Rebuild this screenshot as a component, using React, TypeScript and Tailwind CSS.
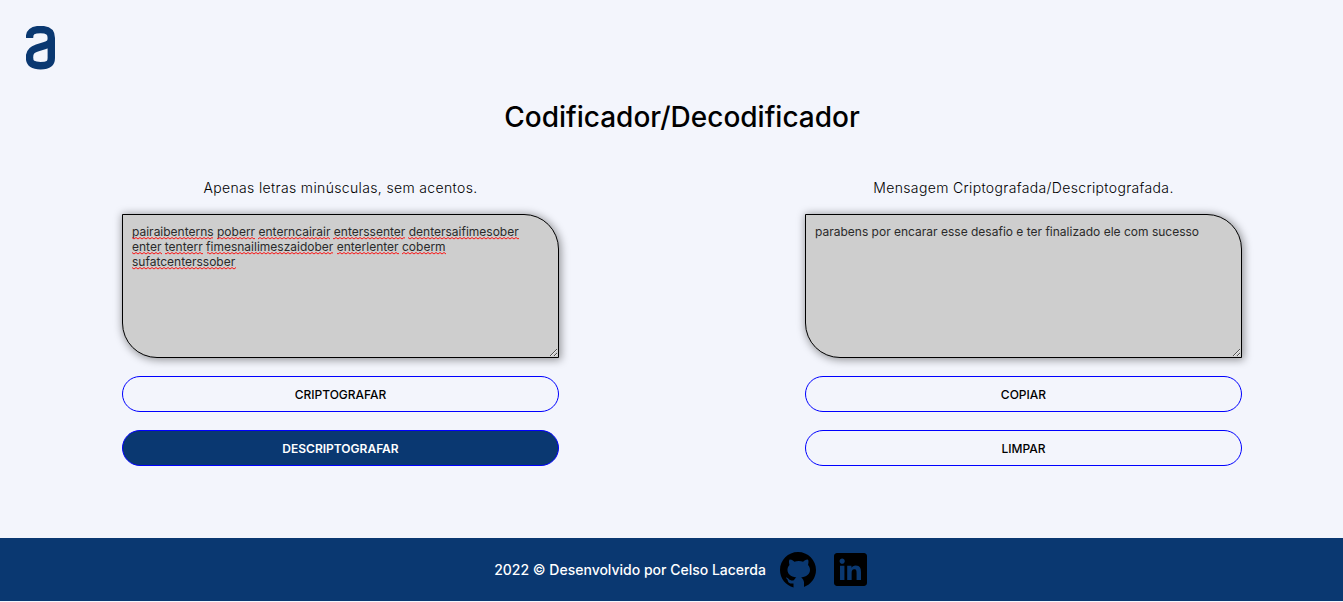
import { useState } from "react";

const FONT = "font-['Inter','Liberation_Sans',sans-serif]";

const SPELLING_MARKS = [
  { x: 0, y: 0, width: 81 },
  { x: 85, y: 0, width: 38 },
  { x: 126, y: 0, width: 72 },
  { x: 201, y: 0, width: 72 },
  { x: 276, y: 0, width: 111 },
  { x: 0, y: 15, width: 30 },
  { x: 33, y: 15, width: 38 },
  { x: 75, y: 15, width: 126 },
  { x: 205, y: 15, width: 62 },
  { x: 270, y: 15, width: 44 },
  { x: 0, y: 30, width: 104 },
];

const RULES: [string, string][] = [
  ["e", "enter"],
  ["i", "imes"],
  ["a", "ai"],
  ["o", "ober"],
  ["u", "ufat"],
];

function encode(text: string) {
  return text.replace(/[eiaou]/g, (c) => RULES.find(([k]) => k === c)![1]);
}

function decode(text: string) {
  return RULES.reduce((acc, [plain, coded]) => acc.split(coded).join(plain), text);
}

const INITIAL =
  "pairaibenterns poberr enterncairair enterssenter dentersaifimesober enter tenterr fimesnailimeszaidober enterlenter coberm sufatcenterssober";

const areaClass =
  "block h-36 w-full resize rounded-tr-[35px] rounded-bl-[35px] border border-black bg-[#cecece] py-[9px] pr-6 pl-[9px] text-xs leading-[15px] font-normal text-[#2a2a2a] shadow-[1px_1px_8px_1px_rgba(0,0,0,0.4)] outline-none";
const labelClass =
  "mb-[15px] block pt-px text-center text-sm leading-[22px] font-light tracking-wide";
const buttonClass =
  "h-9 w-full rounded-full border border-[#0000ff] pt-px text-xs uppercase";
const plainButton = "bg-transparent font-medium text-black";
const activeButton = "bg-[#0a3871] font-semibold text-white";

function Logo() {
  return (
    <svg viewBox="0 0 30 44" className="h-11 w-[30px]" role="img" aria-label="Alura">
      <path
        d="M3.5 12 C3.5 5.5 7 3.5 14.500 3.5 C22 3.500 25.300 6 25.300 12 V32 C25.300 38 22 39.700 14.500 39.700 C7 39.700 3.500 37.500 3.500 31.500 C3.500 25.500 6 23.500 11 22 L19 19.500 C23.500 18 25.300 16.500 25.300 12"
        fill="none"
        stroke="#0a3871"
        strokeWidth="7.400"
      />
    </svg>
  );
}

function GithubIcon() {
  return (
    <svg viewBox="3 3 24 24" className="size-9" fill="#000" aria-hidden="true">
      <path d="M15,3C8.373,3,3,8.373,3,15c0,5.623,3.872,10.328,9.092,11.630C12.036,26.468,12,26.280,12,26.047v-2.051c-0.487,0-1.303,0-1.508,0c-0.821,0-1.551-0.353-1.905-1.009c-0.393-0.729-0.461-1.844-1.435-2.526c-0.289-0.227-0.069-0.486,0.264-0.451c0.615,0.174,1.125,0.596,1.605,1.222c0.478,0.627,0.703,0.769,1.596,0.769c0.433,0,1.081-0.025,1.691-0.121c0.328-0.833,0.895-1.600,1.588-1.962c-3.996-0.411-5.903-2.399-5.903-5.098c0-1.162,0.495-2.286,1.336-3.233C9.053,10.647,8.706,8.730,9.435,8c1.798,0,2.885,1.166,3.146,1.481C13.477,9.174,14.461,9,15.495,9c1.036,0,2.024,0.174,2.922,0.483C18.675,9.170,19.763,8,21.565,8c0.732,0.731,0.381,2.656,0.102,3.594c0.836,0.945,1.328,2.066,1.328,3.226c0,2.697-1.904,4.684-5.894,5.097C18.199,20.490,19,22.100,19,23.313v2.734c0,0.104-0.023,0.179-0.035,0.268C23.641,24.676,27,20.236,27,15C27,8.373,21.627,3,15,3z" />
    </svg>
  );
}

function LinkedinIcon() {
  return (
    <svg viewBox="4 4 22 22" className="size-[33px]" fill="#000" aria-hidden="true">
      <path d="M24,4H6C4.895,4,4,4.895,4,6v18c0,1.105,0.895,2,2,2h18c1.105,0,2-0.895,2-2V6C26,4.895,25.105,4,24,4z M10.954,22h-2.950v-9.492h2.950V22z M9.449,11.151c-0.951,0-1.720-0.771-1.720-1.720c0-0.949,0.770-1.719,1.720-1.719c0.948,0,1.719,0.771,1.719,1.719C11.168,10.380,10.397,11.151,9.449,11.151z M22.004,22h-2.948v-4.616c0-1.101-0.020-2.517-1.533-2.517c-1.535,0-1.771,1.199-1.771,2.437V22h-2.948v-9.492h2.830v1.297h0.040c0.394-0.746,1.356-1.533,2.791-1.533c2.987,0,3.539,1.966,3.539,4.522V22z" />
    </svg>
  );
}

function SpellingMarks() {
  return (
    <svg
      className="pointer-events-none absolute top-[22px] left-[10px] h-[34px] w-[400px]"
      aria-hidden="true"
    >
      <defs>
        <pattern id="squiggle" width="4" height="15" patternUnits="userSpaceOnUse">
          <path d="M0 1.500 L2 3 L4 1.500" fill="none" stroke="#ff0000" strokeWidth="0.900" />
        </pattern>
      </defs>
      {SPELLING_MARKS.map((m) => (
        <rect key={`${m.x}-${m.y}`} x={m.x} y={m.y} width={m.width} height="4" fill="url(#squiggle)" />
      ))}
    </svg>
  );
}

export default function App() {
  const [input, setInput] = useState(INITIAL);
  const [output, setOutput] = useState(
    "parabens por encarar esse desafio e ter finalizado ele com sucesso",
  );

  return (
    <div className={`min-h-screen bg-[#f3f5fc] text-black ${FONT}`}>
      <header className="pt-[26px] pl-[26px]">
        <Logo />
      </header>
      <main className="pr-[101px] pl-[122px]">
        <h1 className="pt-7 text-center text-[28px] leading-[38px] font-medium">
          Codificador/Decodificador
        </h1>
        <div className="mt-10 grid grid-cols-2 gap-[246px]">
          <section className="flex flex-col gap-[18px]">
            <div>
              <label htmlFor="entrada" className={labelClass}>
                Apenas letras minúsculas, sem acentos.
              </label>
              <div className="relative">
                <textarea
                  id="entrada"
                  className={areaClass}
                  spellCheck={false}
                  value={input}
                  onChange={(e) => setInput(e.target.value)}
                />
                {input === INITIAL && <SpellingMarks />}
              </div>
            </div>
            <button type="button" className={`${buttonClass} ${plainButton}`} onClick={() => setOutput(encode(input))}>
              Criptografar
            </button>
            <button type="button" className={`${buttonClass} ${activeButton}`} onClick={() => setOutput(decode(input))}>
              Descriptografar
            </button>
          </section>
          <section className="flex flex-col gap-[18px]">
            <div>
              <label htmlFor="saida" className={labelClass}>
                Mensagem Criptografada/Descriptografada.
              </label>
              <textarea
                id="saida"
                className={areaClass}
                spellCheck={false}
                value={output}
                onChange={(e) => setOutput(e.target.value)}
              />
            </div>
            <button
              type="button"
              className={`${buttonClass} ${plainButton}`}
              onClick={() => navigator.clipboard?.writeText(output)}
            >
              Copiar
            </button>
            <button type="button" className={`${buttonClass} ${plainButton}`} onClick={() => setOutput("")}>
              Limpar
            </button>
          </section>
        </div>
      </main>
      <footer className="mt-[72px] flex h-[63px] items-center justify-center bg-[#0a3871] pl-[18px] text-sm font-medium text-white">
        <p>2022 © Desenvolvido por Celso Lacerda</p>
        <a href="#github" aria-label="GitHub" className="ml-[14px]">
          <GithubIcon />
        </a>
        <a href="#linkedin" aria-label="LinkedIn" className="ml-[18px]">
          <LinkedinIcon />
        </a>
      </footer>
    </div>
  );
}
